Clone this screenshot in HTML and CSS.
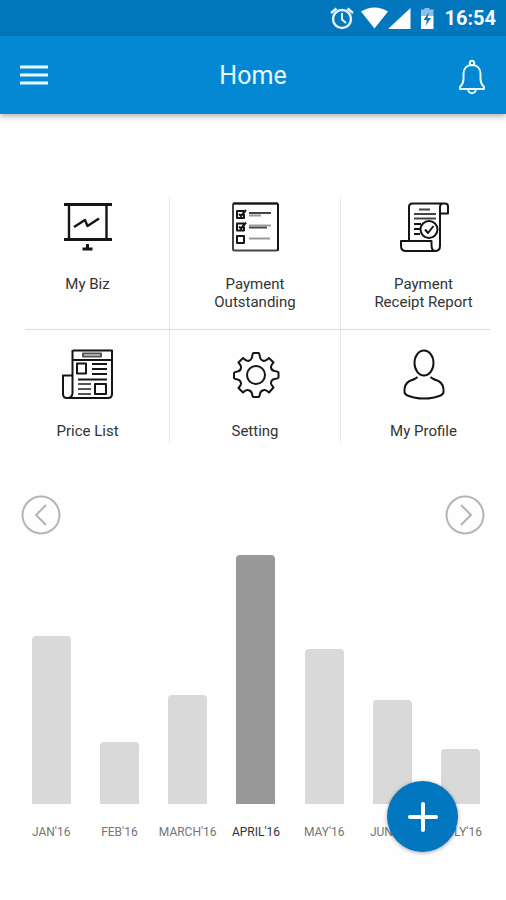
FILE: index.html
```html
<!DOCTYPE html>
<html lang="en">
<head>
<meta charset="utf-8">
<meta name="viewport" content="width=device-width, initial-scale=1">
<title>Home</title>
<link rel="stylesheet" href="styles.css">
</head>
<body>
<div class="app">
  <div class="status">
    <svg class="status-icons" width="108" height="24" viewBox="0 0 108 24" fill="#fff" aria-hidden="true">
      <g fill="none" stroke="#e4f5ff" stroke-width="2.4">
        <circle cx="14" cy="13" r="9"/>
        <path d="M14 7v6.500l4 3.500" stroke-width="2"/>
        <path d="M3 7l5.500-4.500M25 7l-5.500-4.500"/>
      </g>
      <path d="M33 5.500Q46.500-2.500 60 5.500L46.500 22.500z"/>
      <path d="M82.500 2v21H60z"/>
      <path d="M93 3.500h3.500V2h5v1.500h4V10H93z" opacity=".55"/>
      <path d="M93 10h12.500v13H93z"/>
      <path d="M101 6l-5.500 8h3.500l-1.500 6 5.500-8h-3.500z" fill="#0277bd"/>
    </svg>
    <time>16:54</time>
  </div>
  <header class="bar">
    <button class="icon-button" aria-label="Menu">
      <svg width="28" height="20" viewBox="0 0 28 20" stroke="#e4f7ff" stroke-width="3"><path d="M0 2h28M0 10h28M0 18h28"/></svg>
    </button>
    <h1>Home</h1>
    <button class="icon-button" aria-label="Notifications">
      <svg width="28" height="36" viewBox="0 0 28 36" fill="none" stroke="#e8f8ff" stroke-width="2" stroke-linejoin="round">
        <circle cx="14" cy="4" r="2.200"/>
        <path d="M14 6C8.500 6 5.500 10 5.500 15v5c0 4-1.500 6-3.500 8v2h24v-2c-2-2-3.500-4-3.500-8v-5C22.500 10 19.500 6 14 6z"/>
        <path d="M10 30c0 5.500 8 5.500 8 0"/>
      </svg>
    </button>
  </header>

  <main>
    <nav class="menu">
      <div class="row">
        <a class="tile" href="#biz">
          <svg viewBox="0 0 50 50" class="glyph">
            <path d="M1 2.500h48M1 37.500h48" stroke-width="3"/>
            <path d="M6 3v34M43.500 3v34M11 25l11-7 2.500 6 11.500-7.500" stroke-width="2.400"/>
            <path d="M24.500 42v4M19.500 47h10" stroke-width="3"/>
          </svg>
          <span>My Biz</span>
        </a>
        <a class="tile" href="#outstanding">
          <svg viewBox="0 0 50 50" class="glyph">
            <rect x="3" y="1.500" width="45" height="47" rx="1.500" stroke="#444"/>
            <path d="M48 2v46.500M3 1.500h45"/>
            <path d="M14 9H7v7h7v-4M14 21.500H7v7h7v-4M7 34h7v7H7zM9 12l2 2 5-6M9 24.500l2 2 5-6"/>
            <path d="M19 11h22M19 25.500h18" stroke="#444"/>
            <path d="M19 13.500h12M19 23.500h22M19 36.500h21" stroke="#999"/>
          </svg>
          <span>Payment<br>Outstanding</span>
        </a>
        <a class="tile" href="#receipts">
          <svg viewBox="0 0 50 50" class="glyph">
            <path d="M10 38V5q0-3.500 3.500-3.500H46q3 0 3 3v7h-8M46 1.500h-2q-3 0-3 4V44q0 5-5 5H7q-5 0-5-5v-5h30.500v4q0 6 4 6"/>
            <path d="M20 7.500h11M15 12h22M15 16.500h22" stroke="#444"/>
            <path d="M15 22h7M15 27h7M15 32h6"/>
            <circle cx="30" cy="27.500" r="8.500" fill="#fff"/>
            <path d="M26 27.500l3 3.500 5.500-7"/>
          </svg>
          <span>Payment<br>Receipt Report</span>
        </a>
      </div>
      <hr>
      <div class="row row-last">
        <a class="tile" href="#prices">
          <svg viewBox="0 0 50 50" class="glyph">
            <path d="M10 1.500h39V45q0 4-4 4H4q-4 0-4-4V26.500h9M9.500 1v43q0 4-4 5M10 11h39"/>
            <path d="M20 4.500h18v3H20z" stroke="#555"/>
            <path d="M14 14.500h9v10h-9zM32 35h11v10H32z"/>
            <path d="M29 15h15M29 20h15M29 25h15M15 30.500h29"/>
            <path d="M15 35h13M15 40h13M15 45h13" stroke="#555"/>
          </svg>
          <span>Price List</span>
        </a>
        <a class="tile" href="#setting">
          <svg viewBox="0 0 50 50" class="glyph">
            <circle cx="26" cy="26" r="9"/>
            <path d="M22 8.500q.5-4.500 1.500-4.500h5q1 0 1.500 4.500 1 3 4 3.500 2 0 5-3l4.500 4.500q-3 3-2.500 5 .5 3 3.500 3.500 4 .5 4 1.500v5q0 1-4 1.500-3 .5-3.500 3.500-.5 2 2.500 5L39 43.500q-3-3-5-2.500-3 .5-4 3.500-.5 3.500-1.500 3.500h-5q-1 0-1.500-3.500-1-3-4-3.500-2-.5-5 2.500L8.500 39q3-3 2.500-5-.5-3-3.500-3.500Q4 30 4 29v-5q0-1 3.500-1.500Q10.500 22 11 19q.5-2-2.500-5.500L13 9q3 3 5 3 3-.5 4-3.500z"/>
          </svg>
          <span>Setting</span>
        </a>
        <a class="tile" href="#profile">
          <svg viewBox="0 0 50 50" class="glyph">
            <ellipse cx="25" cy="14" rx="9.500" ry="12.500"/>
            <path d="M18.500 28q-2 2-8 4Q5 35 5.500 43q0 2 3 3.500 7 3 16.500 3t16.500-3q3-1.500 3-3.500.5-8-5-11-6-2-8-4"/>
          </svg>
          <span>My Profile</span>
        </a>
      </div>
    </nav>

    <section class="chart" aria-label="Monthly totals">
      <div class="pager">
        <button aria-label="Previous months"><svg width="40" height="40" viewBox="0 0 40 40"><circle cx="20" cy="20" r="18.500"/><path d="M25 10L15 20l10 10"/></svg></button>
        <button aria-label="Next months"><svg width="40" height="40" viewBox="0 0 40 40"><circle cx="20" cy="20" r="18.500"/><path d="M16 10l10 10-10 10"/></svg></button>
      </div>
      <div class="columns">
        <div class="column"><i style="height:168px"></i><span>JAN'16</span></div>
        <div class="column"><i style="height:62px"></i><span>FEB'16</span></div>
        <div class="column"><i style="height:109px"></i><span>MARCH'16</span></div>
        <div class="column current"><i style="height:249px"></i><span>APRIL'16</span></div>
        <div class="column"><i style="height:155px"></i><span>MAY'16</span></div>
        <div class="column"><i style="height:104px"></i><span>JUNE'16</span></div>
        <div class="column"><i style="height:55px"></i><span>JULY'16</span></div>
      </div>
    </section>
  </main>
  <button class="fab" aria-label="Add"><svg width="32" height="32" viewBox="0 0 32 32" stroke="#fff" stroke-width="4" stroke-linecap="round"><path d="M16 3v26M3 16h26"/></svg></button>
</div>
</body>
</html>
```
FILE: styles.css
```css
* { box-sizing: border-box; }

body {
  margin: 0;
  background: #fefefe;
  color: #333;
  font-family: Roboto, "Liberation Sans", sans-serif;
}

button {
  padding: 0;
  border: 0;
  background: none;
  cursor: pointer;
}

svg { display: block; }

.app {
  position: relative;
  min-height: 100vh;
}

.status {
  display: flex;
  align-items: center;
  justify-content: flex-end;
  gap: 8px;
  height: 36px;
  padding: 0 10px;
  background: #0277bd;
  color: #f4fbff;
  font-size: 20px;
  font-weight: 700;
}

.bar {
  display: flex;
  align-items: center;
  justify-content: space-between;
  height: 78px;
  padding: 0 20px;
  background: #0588d3;
  box-shadow: 0 2px 6px rgba(60, 40, 40, 0.4);
}

.bar h1 {
  margin: 0;
  color: #e8f8ff;
  font-size: 25px;
  font-weight: 400;
}

.icon-button svg { margin-top: 4px; }
.icon-button:first-child svg { margin-top: 0; }

.menu { padding-top: 83px; }

.row {
  display: grid;
  grid-template-columns: 164fr 171fr 165fr;
  padding-left: 6px;
}

.menu hr {
  height: 1px;
  margin: 0 16px 0 25px;
  border: 0;
  background: #dcdcdc;
}

.tile {
  display: flex;
  flex-direction: column;
  align-items: center;
  gap: 23px;
  padding: 5px 0 18px;
  border-right: 1px solid #e8e8e8;
  color: #333;
  font-size: 15px;
  line-height: 18px;
  text-align: center;
  text-decoration: none;
}

.tile:last-child { border-right: 0; }

.row-last .tile { padding: 19px 0 3px; }

.glyph {
  width: 50px;
  height: 50px;
  overflow: visible;
  fill: none;
  stroke: #151515;
  stroke-width: 2;
  stroke-linejoin: round;
}

.pager {
  display: flex;
  justify-content: space-between;
  padding: 52px 21px 0;
}

.pager svg {
  fill: none;
  stroke: #b5b5b5;
  stroke-width: 2;
}

.columns {
  display: grid;
  grid-template-columns: repeat(7, 1fr);
  align-items: end;
  margin-top: 20px;
  padding: 0 11px 0 17px;
}

.column {
  display: flex;
  flex-direction: column;
  align-items: center;
  gap: 20px;
  color: #757575;
  font-size: 12px;
  line-height: 16px;
  white-space: nowrap;
}

.column i {
  width: 39px;
  border-radius: 4px 4px 0 0;
  background: #d9d9d9;
}

.current { color: #333; }
.current i { background: #999; }

.fab {
  position: absolute;
  right: 48px;
  bottom: 48px;
  display: grid;
  place-items: center;
  width: 71px;
  height: 71px;
  border-radius: 50%;
  background: #0277bf;
  box-shadow: 0 1px 4px rgba(0, 0, 0, 0.35);
}
```
